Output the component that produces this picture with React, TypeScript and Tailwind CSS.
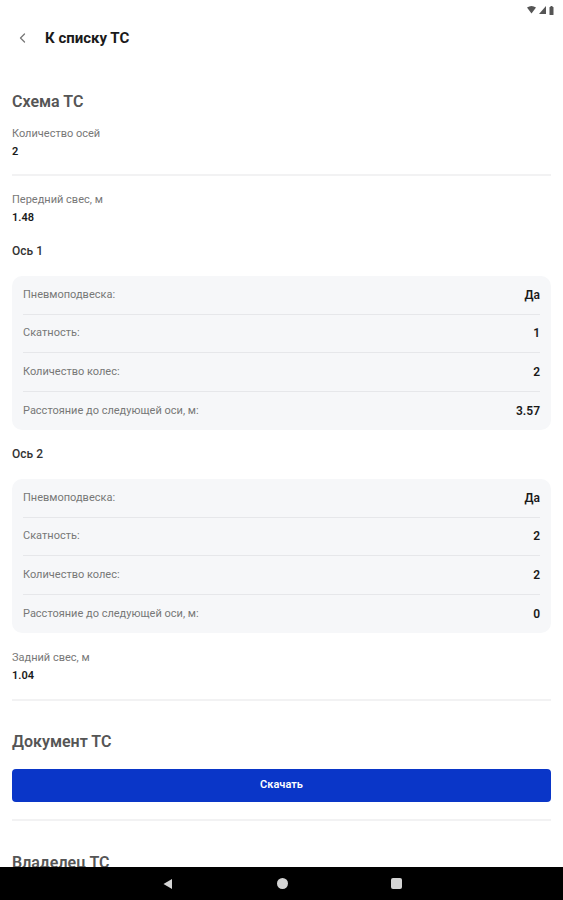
import React from 'react';

type Row = { label: string; value: string };

const axles: { title: string; rows: Row[] }[] = [
  {
    title: 'Ось 1',
    rows: [
      { label: 'Пневмоподвеска:', value: 'Да' },
      { label: 'Скатность:', value: '1' },
      { label: 'Количество колес:', value: '2' },
      { label: 'Расстояние до следующей оси, м:', value: '3.57' },
    ],
  },
  {
    title: 'Ось 2',
    rows: [
      { label: 'Пневмоподвеска:', value: 'Да' },
      { label: 'Скатность:', value: '2' },
      { label: 'Количество колес:', value: '2' },
      { label: 'Расстояние до следующей оси, м:', value: '0' },
    ],
  },
];

function Field({ label, value }: Row) {
  return (
    <div className="flex flex-col gap-[5px]">
      <span className="text-[11px] leading-[13px] text-[#777]">{label}</span>
      <span className="text-[11px] leading-[13px] font-semibold text-[#1a1a1a]">{value}</span>
    </div>
  );
}

function AxleCard({ rows }: { rows: Row[] }) {
  return (
    <div className="rounded-[10px] bg-[#f6f7f9] px-[11px]">
      {rows.map((r, i) => (
        <div
          key={i}
          className={`flex h-[38.5px] items-center justify-between ${i < rows.length - 1 ? 'border-b border-[#e6e7ea]' : ''}`}
        >
          <span className="text-[11px] text-[#777]">{r.label}</span>
          <span className="text-[12px] font-semibold text-[#1a1a1a]">{r.value}</span>
        </div>
      ))}
    </div>
  );
}

export default function App() {
  return (
    <div
      className="flex h-[900px] w-[563px] flex-col overflow-hidden bg-white"
      style={{ fontFamily: 'Roboto, "Noto Sans", sans-serif' }}
    >
      {/* Status bar */}
      <div className="flex h-[20px] items-center justify-end gap-[3px] pr-[9px]">
        <svg width="9" height="8" viewBox="0 0 9 8">
          <path d="M0 1.5 Q4.5 -1.5 9 1.5 L4.5 7.5 Z" fill="#555" />
        </svg>
        <svg width="7" height="8" viewBox="0 0 7 8">
          <path d="M7 0 L7 8 L0 8 Z" fill="#555" />
        </svg>
        <svg width="5" height="9" viewBox="0 0 5 9">
          <rect x="1.5" y="0" width="2" height="1" fill="#555" />
          <rect x="0.5" y="1" width="4" height="8" rx="0.5" fill="#555" />
        </svg>
      </div>

      {/* Header */}
      <div className="flex h-[36px] items-center gap-[16px] pl-[17px]">
        <svg width="12" height="12" viewBox="0 0 12 12" fill="none">
          <path d="M7.5 2 L3.5 6 L7.5 10" stroke="#777" strokeWidth="1.3" strokeLinecap="round" strokeLinejoin="round" />
        </svg>
        <span className="text-[15px] font-bold text-[#1a1a1a]">К списку ТС</span>
      </div>

      {/* Content */}
      <div className="flex-1 overflow-hidden px-[12px]">
        <h2 className="mt-[34px] text-[16px] font-semibold text-[#555]">Схема ТС</h2>

        <div className="mt-[13px]">
          <Field label="Количество осей" value="2" />
        </div>

        <div className="mt-[16px] h-[2px] bg-[#f2f2f3]" />

        <div className="mt-[17px]">
          <Field label="Передний свес, м" value="1.48" />
        </div>

        {axles.map((a, i) => (
          <div key={i} className={i === 0 ? 'mt-[18px]' : 'mt-[15px]'}>
            <div className="text-[12px] font-medium text-[#333]">{a.title}</div>
            <div className="mt-[16px]">
              <AxleCard rows={a.rows} />
            </div>
          </div>
        ))}

        <div className="mt-[18px]">
          <Field label="Задний свес, м" value="1.04" />
        </div>

        <div className="mt-[17px] h-[2px] bg-[#f2f2f3]" />

        <h2 className="mt-[29px] text-[16px] font-semibold text-[#555]">Документ ТС</h2>

        <button className="mt-[15px] flex h-[33px] w-full items-center justify-center rounded-[4px] bg-[#0a36c8] text-[11px] font-semibold text-white">
          Скачать
        </button>

        <div className="mt-[17px] h-[2px] bg-[#f2f2f3]" />

        <h2 className="mt-[30px] text-[16px] font-semibold text-[#555]">Владелец ТС</h2>
      </div>

      {/* Navigation bar */}
      <div className="flex h-[33px] shrink-0 items-center justify-center gap-[103px] bg-black">
        <svg width="12" height="12" viewBox="0 0 12 12">
          <path d="M10 1 L10 11 L1.5 6 Z" fill="#d4d4d4" />
        </svg>
        <div className="h-[11px] w-[11px] rounded-full bg-[#d4d4d4]" />
        <div className="h-[11px] w-[11px] rounded-[2px] bg-[#d4d4d4]" />
      </div>
    </div>
  );
}
